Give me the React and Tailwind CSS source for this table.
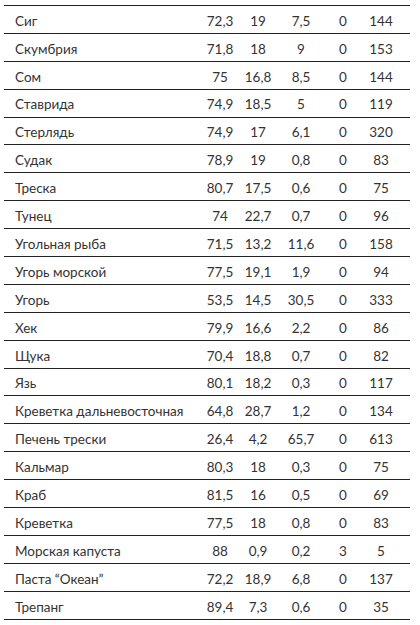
const rows = [
  ['Сиг', '72,3', '19', '7,5', '0', '144'],
  ['Скумбрия', '71,8', '18', '9', '0', '153'],
  ['Сом', '75', '16,8', '8,5', '0', '144'],
  ['Ставрида', '74,9', '18,5', '5', '0', '119'],
  ['Стерлядь', '74,9', '17', '6,1', '0', '320'],
  ['Судак', '78,9', '19', '0,8', '0', '83'],
  ['Треска', '80,7', '17,5', '0,6', '0', '75'],
  ['Тунец', '74', '22,7', '0,7', '0', '96'],
  ['Угольная рыба', '71,5', '13,2', '11,6', '0', '158'],
  ['Угорь морской', '77,5', '19,1', '1,9', '0', '94'],
  ['Угорь', '53,5', '14,5', '30,5', '0', '333'],
  ['Хек', '79,9', '16,6', '2,2', '0', '86'],
  ['Щука', '70,4', '18,8', '0,7', '0', '82'],
  ['Язь', '80,1', '18,2', '0,3', '0', '117'],
  ['Креветка дальневосточная', '64,8', '28,7', '1,2', '0', '134'],
  ['Печень трески', '26,4', '4,2', '65,7', '0', '613'],
  ['Кальмар', '80,3', '18', '0,3', '0', '75'],
  ['Краб', '81,5', '16', '0,5', '0', '69'],
  ['Креветка', '77,5', '18', '0,8', '0', '83'],
  ['Морская капуста', '88', '0,9', '0,2', '3', '5'],
  ['Паста “Океан”', '72,2', '18,9', '6,8', '0', '137'],
  ['Трепанг', '89,4', '7,3', '0,6', '0', '35'],
];

export default function App() {
  return (
    <div className="w-[420px] h-[625px] bg-white pt-[5px] pl-[4px]" style={{ fontFamily: 'Lato, "Noto Sans", sans-serif' }}>
      <div className="w-[406px] border-t border-[#222]">
        {rows.map(r => (
          <div key={r[0]} className="flex items-center h-[27.9px] pt-[3px] border-b border-[#222] text-[13.5px] text-[#333]">
            <div className="w-[196px] pl-[11px] whitespace-nowrap">{r[0]}</div>
            <div className="w-[40px] text-center">{r[1]}</div>
            <div className="w-[36px] text-center">{r[2]}</div>
            <div className="w-[50px] text-center">{r[3]}</div>
            <div className="w-[34px] text-center">{r[4]}</div>
            <div className="w-[42px] text-center">{r[5]}</div>
          </div>
        ))}
      </div>
    </div>
  );
}
